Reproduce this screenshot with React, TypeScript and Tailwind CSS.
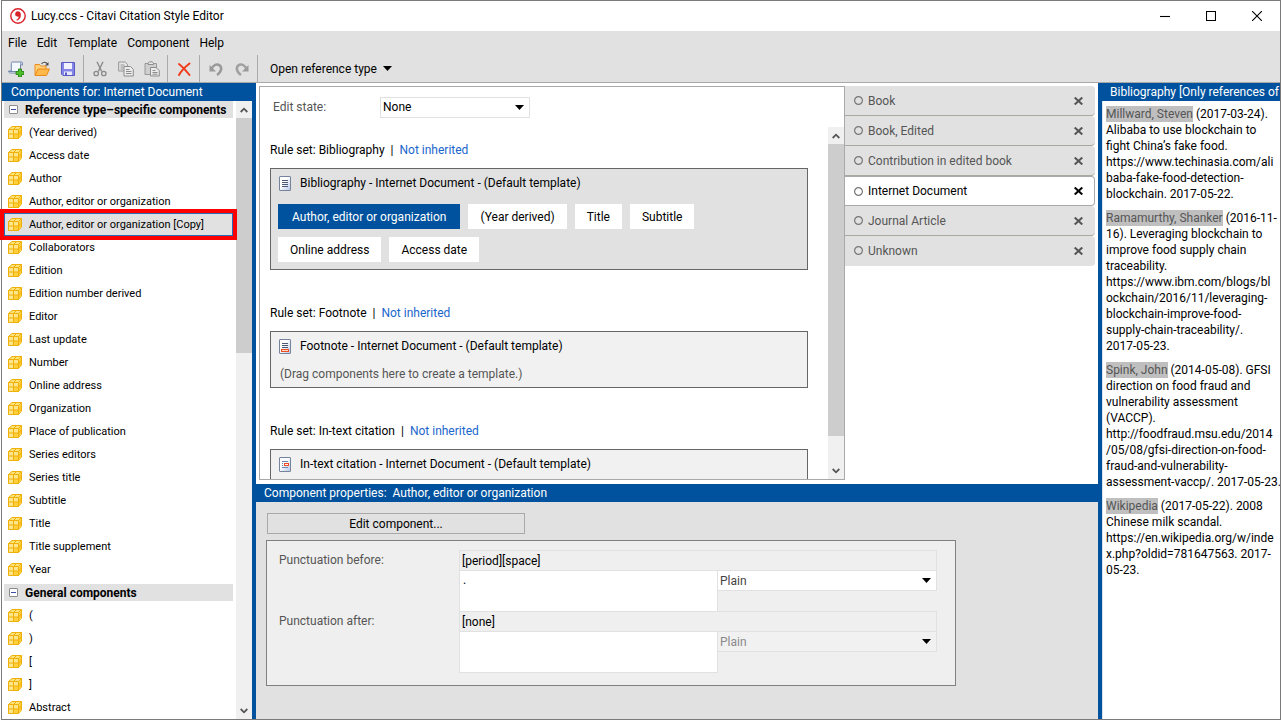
import type { ReactNode } from "react";
import clsx from "clsx";

const menuItems = ["File", "Edit", "Template", "Component", "Help"];

const specificComponents = [
  "(Year derived)",
  "Access date",
  "Author",
  "Author, editor or organization",
  "Author, editor or organization [Copy]",
  "Collaborators",
  "Edition",
  "Edition number derived",
  "Editor",
  "Last update",
  "Number",
  "Online address",
  "Organization",
  "Place of publication",
  "Series editors",
  "Series title",
  "Subtitle",
  "Title",
  "Title supplement",
  "Year",
];
const generalComponents = ["(", ")", "[", "]", "Abstract"];
const selectedComponent = "Author, editor or organization [Copy]";

const chips = ["Author, editor or organization", "(Year derived)", "Title", "Subtitle", "Online address", "Access date"];

const referenceTypes = ["Book", "Book, Edited", "Contribution in edited book", "Internet Document", "Journal Article", "Unknown"];

const references = [
  {
    author: "Millward, Steven",
    lines: [" (2017-03-24).", "Alibaba to use blockchain to", "fight China’s fake food.", "https://www.techinasia.com/ali", "baba-fake-food-detection-", "blockchain. 2017-05-22."],
  },
  {
    author: "Ramamurthy, Shanker",
    lines: [" (2016-11-", "16). Leveraging blockchain to", "improve food supply chain", "traceability.", "https://www.ibm.com/blogs/bl", "ockchain/2016/11/leveraging-", "blockchain-improve-food-", "supply-chain-traceability/.", "2017-05-23."],
  },
  {
    author: "Spink, John",
    lines: [" (2014-05-08). GFSI", "direction on food fraud and", "vulnerability assessment", "(VACCP).", "http://foodfraud.msu.edu/2014", "/05/08/gfsi-direction-on-food-", "fraud-and-vulnerability-", "assessment-vaccp/. 2017-05-23."],
  },
  {
    author: "Wikipedia",
    lines: [" (2017-05-22). 2008", "Chinese milk scandal.", "https://en.wikipedia.org/w/inde", "x.php?oldid=781647563. 2017-", "05-23."],
  },
];

const AppLogo = () => (
  <svg width="16" height="16" viewBox="0 0 16 16" fill="none">
    <circle cx="8" cy="8" r="7.2" stroke="#d8232a" strokeWidth="1.4" />
    <path d="M7.800 3.300a2.700 2.700 0 0 0-.7 5.300c.8.200 1.400 0 1.700-.2-.1 1.500-1 2.600-2.500 3.400l.7 1c2.400-1.100 3.900-3.100 3.900-5.800C10.900 4.700 9.800 3.300 7.800 3.300z" fill="#d8232a" />
  </svg>
);

const CubeIcon = () => (
  <svg width="14" height="13" viewBox="0 0 14 13" className="shrink-0">
    <path d="M.5 3.500 4 .5h9.500V9L10.500 12.500H.5z" fill="#ffe27a" stroke="#efb008" />
    <path d="M1 4h9v8H1z" fill="#ffe58a" />
    <path d="M6 8h4v4H6z" fill="#ffcf3c" />
    <path d="M11 4.500 13 2v7l-2 2.500z" fill="#ffc933" />
    <path d="M.5 3.500h10v9M.5 8h10l3-3M5.500 12.500v-9l3-3M10.500 3.500l3-3" fill="none" stroke="#efb008" />
  </svg>
);

const Collapse = () => (
  <svg width="9" height="9" viewBox="0 0 9 9" className="shrink-0">
    <rect x=".5" y=".5" width="8" height="8" rx=".5" fill="#fff" stroke="#8c8c8c" />
    <path d="M2 4.500h5" stroke="#3b4fa8" />
  </svg>
);

const PageIcon = ({ kind }: { kind: "text" | "footnote" | "intext" }) => (
  <svg width="12" height="15" viewBox="0 0 12 15" className="shrink-0">
    <defs>
      <linearGradient id={kind} x1="0" y1="0" x2="1" y2="1">
        <stop offset=".4" stopColor="#fff" />
        <stop offset="1" stopColor="#b4c6e8" />
      </linearGradient>
    </defs>
    <rect x=".5" y=".5" width="11" height="14" rx=".5" fill={`url(#${kind})`} stroke="#76839c" />
    {kind === "text" && <path d="M3 4.500h6M3 6.500h6M3 8.500h6M3 10.500h6" stroke="#4d5a73" />}
    {kind === "footnote" && (
      <>
        <path d="M3 4.500h6M3 6.500h6M3 8.500h6" stroke="#4d5a73" />
        <rect x="2.500" y="10.500" width="7" height="2" fill="#ffd9cc" stroke="#ee4d22" />
      </>
    )}
    {kind === "intext" && (
      <>
        <path d="M3 4.500h6M3 6.500h1M3 8.500h1M3 10.500h6" stroke="#6d87b8" />
        <rect x="5.500" y="6.500" width="4" height="2" fill="#fff" stroke="#ee4d22" />
      </>
    )}
  </svg>
);

const Caret = () => (
  <svg width="9" height="5" viewBox="0 0 9 5">
    <path d="M0 0h9L4.500 5z" fill="#000" />
  </svg>
);

const Chevron = ({ down = false }: { down?: boolean }) => (
  <svg width="8" height="6" viewBox="0 0 8 6" className={clsx(down && "rotate-180")}>
    <path d="M.7 5 4 1.700 7.300 5" fill="none" stroke="#555" strokeWidth="1.800" />
  </svg>
);

const ToolButton = ({ label, children }: { label: string; children: ReactNode }) => (
  <button aria-label={label} className="flex h-full w-[26px] items-center justify-center">
    <svg width="16" height="16" viewBox="0 0 16 16" fill="none">
      {children}
    </svg>
  </button>
);

const Divider = () => <div className="h-full w-px bg-[#a9a9a9]" />;

const Toolbar = () => (
  <div className="flex h-7 items-center border-b border-[#a9a9a5] pl-px">
    <ToolButton label="New">
      <path d="M4 1h9.500c-1 .8-1 2-1 3v8H2.500c-1.500 0-2-1-2-2h2.800V2.500C3.300 1.600 3.600 1 4 1z" fill="#f3f7fe" stroke="#7488ad" />
      <path d="M12.500 4h2V2.200c0-.7-.5-1.200-1-1.200" fill="#c8d6ee" stroke="#7488ad" />
      <path d="M1 10.500h8" stroke="#7488ad" />
      <path d="M10.500 8h3v2.500H16v3h-2.500V16h-3v-2.500H8v-3h2.500z" fill="#4cc02b" stroke="#268316" strokeWidth=".9" />
    </ToolButton>
    <ToolButton label="Open">
      <path d="M1 14V3.500h4.500l1 1.500H12v3" fill="#ffd27a" stroke="#ec8a1a" />
      <path d="M1 14.500 4 8h11.500l-3 6.500z" fill="#ffb84a" stroke="#ec8a1a" />
      <path d="M7.500 2.800C9.500.7 11.800.8 13.500 3" stroke="#4c4c4c" strokeWidth="1.100" />
      <path d="M14.500 1v3.500H11z" fill="#4c4c4c" />
    </ToolButton>
    <ToolButton label="Save">
      <path d="M1.500 1.500h13v13H3l-1.500-1.500z" fill="#8585e8" stroke="#5a5ac4" />
      <path d="M4 2h8v6H4z" fill="#f2f2ff" />
      <path d="M4 10.500h8V14H4z" fill="#e8e8fb" />
      <path d="M5 11.500h2V14H5z" fill="#5a5ac4" />
    </ToolButton>
    <div className="w-[2px]" />
    <Divider />
    <div className="w-[3px]" />
    <ToolButton label="Cut">
      <path d="M5 .8 9.700 10.500M11 .8 6.300 10.500" stroke="#8a8a8a" strokeWidth="1.400" />
      <circle cx="4.200" cy="12.500" r="2.200" stroke="#8a8a8a" strokeWidth="1.300" />
      <circle cx="11.800" cy="12.500" r="2.200" stroke="#8a8a8a" strokeWidth="1.300" />
    </ToolButton>
    <ToolButton label="Copy">
      <path d="M.7 1h6.500l2.300 2.300V10H.7z" fill="#e6e6e6" stroke="#969696" />
      <path d="M2.500 4h4M2.500 6h3M2.500 8h3" stroke="#969696" />
      <path d="M6 5.500h6.500l2.800 2.800V15H6z" fill="#ececec" stroke="#8c8c8c" />
      <path d="M8 8.500h3.500M8 10.500h5.500M8 12.500h5.500" stroke="#8c8c8c" />
    </ToolButton>
    <ToolButton label="Paste">
      <path d="M1 2.500h11.500v11H1z" fill="#cfcfcf" stroke="#999" />
      <path d="M4 3.500h5.500V2L8 .8H5.500L4 2z" fill="#e6e6e6" stroke="#8f8f8f" />
      <path d="M6.500 6.500H12L15.300 9.500V15H6.500z" fill="#ececec" stroke="#8c8c8c" />
      <path d="M8.500 9.500h3M8.500 11.500h5M8.500 13.200h5" stroke="#8c8c8c" />
    </ToolButton>
    <div className="w-[2px]" />
    <Divider />
    <div className="w-[3px]" />
    <ToolButton label="Delete">
      <path d="M3 3c4 3 7.500 7 10.500 11M13.500 2.500C9 6 5.500 9.500 3 14" stroke="#f03c1e" strokeWidth="2" strokeLinecap="round" />
    </ToolButton>
    <div className="w-[2px]" />
    <Divider />
    <div className="w-[3px]" />
    <ToolButton label="Undo">
      <path d="M3.500 8C5 4.500 8 3 10.500 3.800c3 1 3.500 4.500 1.500 7.200-.8 1.200-1.800 2.200-3 3" stroke="#999" strokeWidth="2.600" />
      <path d="M1.500 4v6.500H8z" fill="#999" />
    </ToolButton>
    <ToolButton label="Redo">
      <path d="M12.500 8C11 4.500 8 3 5.500 3.800c-3 1-3.500 4.500-1.500 7.200.8 1.200 1.800 2.200 3 3" stroke="#a0a0a0" strokeWidth="2.600" />
      <path d="M14.500 4v6.500H8z" fill="#999" />
    </ToolButton>
    <div className="w-[2px]" />
    <Divider />
    <button className="flex items-center gap-[6px] pl-3">
      Open reference type
      <Caret />
    </button>
  </div>
);

const WindowButtons = () => (
  <div className="flex h-full">
    {[
      { label: "Minimize", d: "M0 5.500h10" },
      { label: "Maximize", d: "M.5.5h9v9h-9z" },
      { label: "Close", d: "M0 0l10 10M10 0L0 10" },
    ].map(({ label, d }) => (
      <button key={label} aria-label={label} className="flex w-[46px] items-center justify-center">
        <svg width="10" height="10" viewBox="0 0 10 10" fill="none" stroke="#000" strokeWidth="1.100">
          <path d={d} />
        </svg>
      </button>
    ))}
  </div>
);

const PanelHeader = ({ children, className }: { children: ReactNode; className?: string }) => (
  <h2 className={clsx("h-[18px] shrink-0 overflow-hidden bg-[#00529e] px-2 leading-[18px] whitespace-nowrap text-white", className)}>{children}</h2>
);

const GroupHeader = ({ children }: { children: ReactNode }) => (
  <button className="flex h-[17px] w-full items-center gap-[7px] bg-[#e1e1e1] px-[5px] text-[12px] font-bold whitespace-nowrap">
    <Collapse />
    {children}
  </button>
);

const ComponentRow = ({ name }: { name: string }) => {
  const selected = name === selectedComponent;
  return (
    <li className="relative h-[23px]">
      <button className={clsx("flex h-full w-full items-center gap-[7px] border px-[3px] leading-[17px] whitespace-nowrap", selected ? "border-[#2a6ab8] bg-[#e1e1e1]" : "border-transparent")}>
        <CubeIcon />
        {name}
      </button>
      {selected && <div className="pointer-events-none absolute -inset-1 border-4 border-[#ff0000]" />}
    </li>
  );
};

const ScrollBar = ({ thumb }: { thumb: string }) => (
  <div className="flex w-4 shrink-0 flex-col items-center bg-[#f0f0f0]">
    <div className="flex h-[17px] items-center">
      <Chevron />
    </div>
    <div className={clsx("w-full bg-[#cdcdcd]", thumb)} />
    <div className="flex-1" />
    <div className="flex h-[17px] items-center">
      <Chevron down />
    </div>
  </div>
);

const Sidebar = () => (
  <aside className="flex w-[254px] shrink-0 flex-col border-r-4 border-[#00529e]">
    <PanelHeader className="pl-[9px]">Components for: Internet Document</PanelHeader>
    <div className="flex min-h-0 flex-1 bg-white">
      <div className="min-w-0 flex-1 pr-[3px] pl-[2px] text-[11px]">
        <GroupHeader>Reference type–specific components</GroupHeader>
        <ul className="py-[3px]">
          {specificComponents.map((name) => (
            <ComponentRow key={name} name={name} />
          ))}
        </ul>
        <GroupHeader>General components</GroupHeader>
        <ul className="pt-[3px]">
          {generalComponents.map((name) => (
            <ComponentRow key={name} name={name} />
          ))}
        </ul>
      </div>
      <ScrollBar thumb="h-[235px]" />
    </div>
  </aside>
);

const Dropdown = ({ id, value, className, disabled }: { id: string; value: string; className?: string; disabled?: boolean }) => (
  <div className={clsx("relative h-[21px]", className)}>
    <select id={id} aria-label={value} disabled={disabled} className="h-full w-full appearance-none border border-[#e1e1e1] bg-inherit pl-[2px] leading-[18px] opacity-100">
      <option>{value}</option>
    </select>
    <div className="pointer-events-none absolute inset-y-0 right-[6px] flex items-center">
      <Caret />
    </div>
  </div>
);

const RuleSet = ({ name, kind, active, children }: { name: string; kind: "text" | "footnote" | "intext"; active?: boolean; children?: ReactNode }) => (
  <section>
    <p className="flex h-4 items-center gap-[6px] whitespace-nowrap">
      <span>Rule set: {name}</span>
      <span>|</span>
      <a href="#" className="text-[#1a66cc]">
        Not inherited
      </a>
    </p>
    <div className={clsx("mt-[10px] border border-[#666] px-[7px] pt-[6px] pb-[7px]", active ? "bg-[#e1e1e1]" : "bg-[#f1f1f1]")}>
      <div className="flex h-4 items-center gap-[9px] pl-[1px] whitespace-nowrap">
        <PageIcon kind={kind} />
        {name} - Internet Document - (Default template)
      </div>
      {children}
    </div>
  </section>
);

const TemplateEditor = () => (
  <div className="flex min-w-0 flex-1 flex-col border border-[#a9a9a9] bg-white">
    <div className="flex h-10 items-center pl-[13px]">
      <label htmlFor="edit-state" className="w-[107px] text-[#555]">
        Edit state:
      </label>
      <Dropdown id="edit-state" value="None" className="w-[150px] bg-white" />
    </div>
    <div className="flex min-h-0 flex-1">
      <div className="flex min-w-0 flex-1 flex-col gap-[35px] overflow-hidden pt-[15px] pr-5 pl-[10px]">
        <RuleSet name="Bibliography" kind="text" active>
          <div className="mt-[13px] flex max-w-[480px] flex-wrap gap-2">
            {chips.map((chip, index) => (
              <button key={chip} className={clsx("h-[25px] whitespace-nowrap", index === 0 ? "bg-[#00529e] px-[14px] text-white" : "bg-white px-3")}>
                {chip}
              </button>
            ))}
          </div>
        </RuleSet>
        <RuleSet name="Footnote" kind="footnote">
          <p className="mt-3 h-[14px] pl-[2px] leading-4 text-[#555]">(Drag components here to create a template.)</p>
        </RuleSet>
        <RuleSet name="In-text citation" kind="intext">
          <div className="h-[26px]" />
        </RuleSet>
      </div>
      <ScrollBar thumb="h-[292px]" />
    </div>
  </div>
);

const ReferenceTypeTabs = () => (
  <ul className="w-[250px] shrink-0">
    {referenceTypes.map((type) => {
      const active = type === "Internet Document";
      return (
        <li
          key={type}
          className={clsx(
            "flex h-[30px] items-center rounded-r border-b pl-[9px]",
            active ? "border-t border-r border-[#a9a9a9] bg-white pr-[11px] text-black" : "border-[#a9a9a0] bg-[#e1e1e1] pr-3 text-[#555] last:border-transparent"
          )}
        >
          <button className="flex flex-1 items-center gap-[5px] text-left">
            <svg width="9" height="9" viewBox="0 0 9 9" fill="none" stroke="#777" strokeWidth="1.200">
              <circle cx="4.500" cy="4.500" r="3.900" />
            </svg>
            {type}
          </button>
          <button aria-label={`Close ${type}`}>
            <svg width="9" height="8" viewBox="0 0 9 8" fill="none" stroke="currentColor" strokeWidth="2">
              <path d="M.7.5l7.600 7M8.300.5L.7 7.500" />
            </svg>
          </button>
        </li>
      );
    })}
  </ul>
);

const PunctuationField = ({ id, label, summary, value, last }: { id: string; label: string; summary: string; value: string; last?: boolean }) => (
  <div className="flex">
    <label htmlFor={id} className="w-[180px] pt-px text-[#555]">
      {label}
    </label>
    <div className="w-[478px]">
      <input readOnly aria-label={`${label} summary`} value={summary} className="block h-5 w-full border border-b-0 border-[#e1e1e1] bg-[#efefef] px-[2px]" />
      <div className="flex">
        <textarea id={id} defaultValue={value} className={clsx("block w-[259px] resize-none border border-[#e1e1e1] bg-white px-[3px] leading-[18px]", last ? "h-[42px]" : "h-[41px] border-b-0")} />
        <Dropdown id={`${id}-style`} value="Plain" disabled={last} className={clsx("-ml-px flex-1", last ? "bg-[#f1f1f1] text-[#8a8a8a]" : "bg-white text-[#444]")} />
      </div>
    </div>
  </div>
);

const ComponentProperties = () => (
  <section className="shrink-0 bg-[#e1e1e1]">
    <PanelHeader className="whitespace-pre">{"Component properties:  Author, editor or organization"}</PanelHeader>
    <div className="flex flex-col items-start gap-[6px] px-[10px] pt-[11px] pb-[33px]">
      <button className="ml-px h-[21px] w-[258px] border border-[#a9a9a9] leading-[18px]">Edit component...</button>
      <div className="w-[690px] border border-[#808080] bg-[#efefef] pt-[9px] pb-3 pl-3">
        <PunctuationField id="before" label="Punctuation before:" summary="[period][space]" value=". " />
        <PunctuationField id="after" label="Punctuation after:" summary="[none]" value="" last />
      </div>
    </div>
  </section>
);

const BibliographyPreview = () => (
  <aside className="flex w-[182px] shrink-0 flex-col overflow-hidden border-l-4 border-[#00529e]">
    <PanelHeader className="pr-0">Bibliography [Only references of</PanelHeader>
    <div className="flex flex-1 flex-col gap-2 border-l border-[#d9e2ee] bg-white pt-[5px] pl-[3px] leading-4 whitespace-nowrap">
      {references.map(({ author, lines }) => (
        <p key={author}>
          <span className="bg-[#bfbfbf] py-px text-[#555]">{author}</span>
          {lines.map((line) => (
            <span key={line}>
              {line}
              <br />
            </span>
          ))}
        </p>
      ))}
    </div>
  </aside>
);

const App = () => (
  <div className="h-screen bg-white pl-px font-[Roboto,sans-serif] text-[12px] text-black">
    <div className="flex h-full flex-col border border-[#7a7a7a] bg-[#e1e1e1]">
      <header className="flex h-[30px] shrink-0 items-center justify-between bg-white pl-2">
        <h1 className="flex items-center gap-[5px]">
          <AppLogo />
          Lucy.ccs - Citavi Citation Style Editor
        </h1>
        <WindowButtons />
      </header>
      <nav className="flex h-6 shrink-0 items-center gap-[10px] pl-[6px]">
        {menuItems.map((item) => (
          <button key={item}>{item}</button>
        ))}
      </nav>
      <Toolbar />
      <main className="flex min-h-0 flex-1">
        <Sidebar />
        <div className="flex min-w-0 flex-1 flex-col">
          <div className="flex min-h-0 flex-1 bg-white pt-[3px] pr-[3px] pb-1 pl-[3px]">
            <TemplateEditor />
            <ReferenceTypeTabs />
          </div>
          <ComponentProperties />
        </div>
        <BibliographyPreview />
      </main>
    </div>
  </div>
);

export default App;
